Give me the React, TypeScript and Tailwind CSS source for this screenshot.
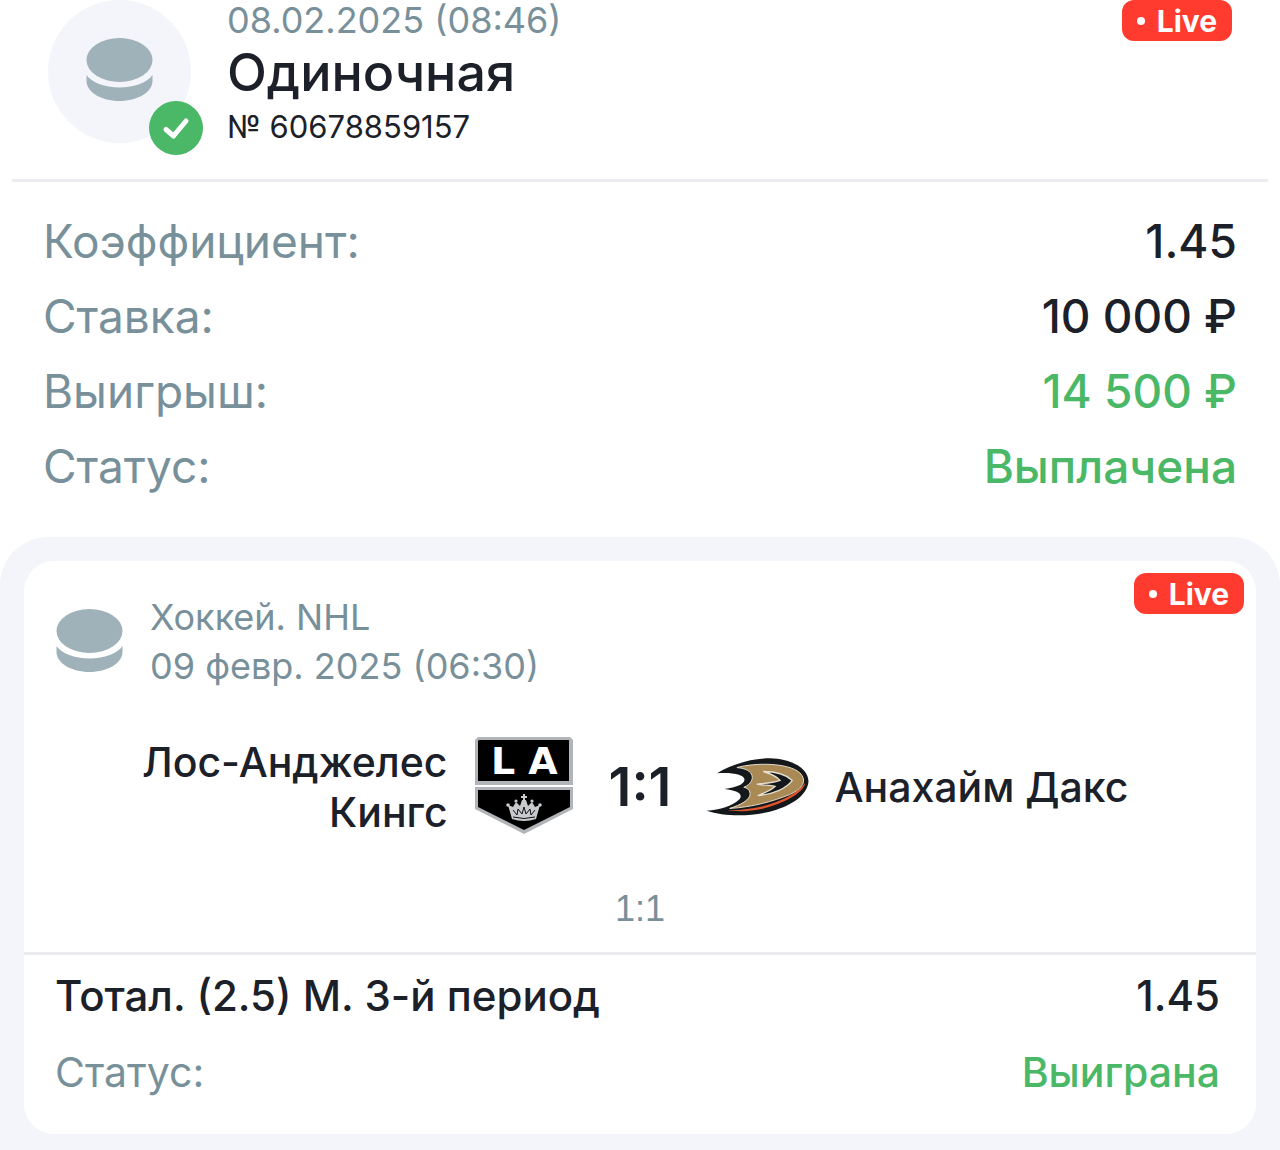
import React from "react";

const Puck = () => (
  <svg viewBox="0 0 66 63" className="h-[63px] w-[67px] shrink-0" fill="#9fb1b9" aria-hidden="true">
    <ellipse cx="33" cy="22" rx="33" ry="22" />
    <path d="M0 37C5 44.5 18 49.5 33 49.5S61 44.5 66 37V43C66 54 51 63 33 63S0 54 0 43Z" />
  </svg>
);

const Check = () => (
  <svg viewBox="0 0 54 54" className="h-[54px] w-[54px]" aria-hidden="true">
    <circle cx="27" cy="27" r="27" fill="#4ab866" />
    <path
      d="M17 28.5L24.5 35L37 20"
      fill="none"
      stroke="#fff"
      strokeWidth="5"
      strokeLinecap="round"
      strokeLinejoin="round"
    />
  </svg>
);

const LiveBadge = () => (
  <span className="flex h-[41px] w-[110px] items-center justify-center gap-3 rounded-xl bg-[#ff3b30] text-[30px] leading-none font-bold text-white">
    <span className="h-2 w-2 rounded-full bg-white" />
    Live
  </span>
);

const KingsLogo = () => (
  <svg viewBox="0 0 100 100" className="h-[100px] w-[100px] shrink-0" role="img" aria-label="Лос-Анджелес Кингс">
    <path d="M4 0H96L99 3V48H1V3Z" fill="#b1b4b8" />
    <path d="M5 3H95V44H4V4Z" fill="#000" />
    <g fill="#fff" fontFamily="DejaVu Sans" fontWeight="700" fontSize="38" textAnchor="middle">
      <text x="29" y="37">L</text>
      <text x="69" y="37">A</text>
    </g>
    <path d="M1 50H99V72L50 97L1 72Z" fill="#b1b4b8" />
    <path d="M4 53H96V70L50 93L4 70Z" fill="#000" />
    <g fill="#c8cacd">
      <path d="M34 68L39 70L42 65L46 69L48 63H52L54 69L58 65L61 70L66 68L62 82Q50 86 38 82Z" />
      <path d="M47 59H49V57H51V59H53V61H51V64H49V61H47Z" />
      <circle cx="34" cy="68" r="1.8" />
      <circle cx="66" cy="68" r="1.8" />
      <circle cx="42" cy="64" r="1.6" />
      <circle cx="58" cy="64" r="1.6" />
    </g>
    <g fill="none" stroke="#111" strokeWidth="1">
      <path d="M39 73L43 78L44 72L48 77L50 70L52 77L56 72L57 78L61 73" />
      <path d="M39 80Q50 83 61 80" />
    </g>
  </svg>
);

const DucksLogo = () => (
  <svg viewBox="48 50 312 182" className="h-[60px] w-[104px] shrink-0" role="img" aria-label="Анахайм Дакс">
    <path
      d="M80 99C125 72 185 54 240 54C312 56 359 88 357 126C353 164 312 193 260 210C205 229 110 234 48 213C90 210 125 200 146 180C160 165 148 152 102 147C140 142 160 134 163 120C165 104 130 96 80 99Z"
      fill="#15181b"
    />
    <path
      d="M140 82C200 66 295 68 330 97C355 122 340 146 300 164C250 184 190 202 118 206C150 196 182 180 180 160C179 149 170 143 161 142C182 134 192 115 184 102C177 89 160 84 140 82Z"
      fill="#a98a55"
      stroke="#e5ddce"
      strokeWidth="3"
    />
    <path d="M112 211C205 213 308 181 347 129C344 160 275 193 218 207C180 216 140 216 112 211Z" fill="#e2552b" />
    <path
      d="M220 94C262 94 292 106 308 121C290 146 250 163 203 167C228 158 246 149 256 139C240 135 220 136 200 132C230 130 254 127 271 121C260 108 240 100 220 94Z"
      fill="#15181b"
      stroke="#e5ddce"
      strokeWidth="4"
    />
  </svg>
);

const stats = [
  { label: "Коэффициент:", value: "1.45", color: "text-[#1c2028]" },
  { label: "Ставка:", value: "10 000 ₽", color: "text-[#1c2028]" },
  { label: "Выигрыш:", value: "14 500 ₽", color: "text-[#4ab866]" },
  { label: "Статус:", value: "Выплачена", color: "text-[#4ab866]" },
];

export default function App() {
  return (
    <main className="flex min-h-screen flex-col bg-white font-['Inter','Liberation_Sans',sans-serif] text-[#1c2028]">
      <header className="mx-3 flex items-start border-b-3 border-[#ebecef] pr-9 pb-[23px] pl-9">
        <div className="relative flex h-[143px] w-[143px] shrink-0 items-center justify-center rounded-full bg-[#f3f5fa] pb-1">
          <Puck />
          <div className="absolute -right-3 -bottom-3">
            <Check />
          </div>
        </div>
        <div className="ml-9 flex-1 pb-2">
          <p className="text-[36px] leading-10 text-[#78909a]">08.02.2025 (08:46)</p>
          <h1 className="text-[52px] leading-[66px] font-medium">Одиночная</h1>
          <p className="text-[31px] leading-[42px]">№ 60678859157</p>
        </div>
        <LiveBadge />
      </header>

      <dl className="px-[43px] pt-[22px] pb-[33px] text-[46px] leading-[75px]">
        {stats.map((s) => (
          <div key={s.label} className="flex justify-between">
            <dt className="text-[#78909a]">{s.label}</dt>
            <dd className={`font-medium ${s.color}`}>{s.value}</dd>
          </div>
        ))}
      </dl>

      <section className="flex-1 rounded-t-[48px] bg-[#f3f5fa] px-6 pt-6 pb-4">
        <article className="rounded-[30px] bg-white">
          <div className="flex items-start pt-3 pr-3 pl-8">
            <div className="flex flex-1 items-center gap-[27px] pt-5">
              <div className="pb-1">
                <Puck />
              </div>
              <p className="text-[36px] leading-[49px] text-[#78909a]">
                Хоккей. NHL
                <br />
                09 февр. 2025 (06:30)
              </p>
            </div>
            <LiveBadge />
          </div>

          <div className="grid grid-cols-[1fr_auto_1fr] items-center gap-[35px] pt-[46px] text-[41px] leading-[50px] font-medium">
            <div className="flex items-center justify-end gap-[26px]">
              <span className="text-right">
                Лос-Анджелес
                <br />
                Кингс
              </span>
              <KingsLogo />
            </div>
            <span className="text-[54px] font-semibold">1:1</span>
            <div className="flex items-center gap-6">
              <DucksLogo />
              <span>Анахайм Дакс</span>
            </div>
          </div>

          <p className="pt-12 pb-[19px] text-center font-['Liberation_Sans',sans-serif] text-[36px] leading-[48px] text-[#78909a]">
            1:1
          </p>

          <div className="border-t-3 border-[#ebecef] pt-[2px] pr-9 pb-[23px] pl-[31px] text-[41px] leading-[77px]">
            <div className="flex justify-between text-[42px] font-medium">
              <span>Тотал. (2.5) М. 3-й период</span>
              <span>1.45</span>
            </div>
            <div className="flex justify-between">
              <span className="text-[#78909a]">Статус:</span>
              <span className="font-medium text-[#4ab866]">Выиграна</span>
            </div>
          </div>
        </article>
      </section>
    </main>
  );
}
